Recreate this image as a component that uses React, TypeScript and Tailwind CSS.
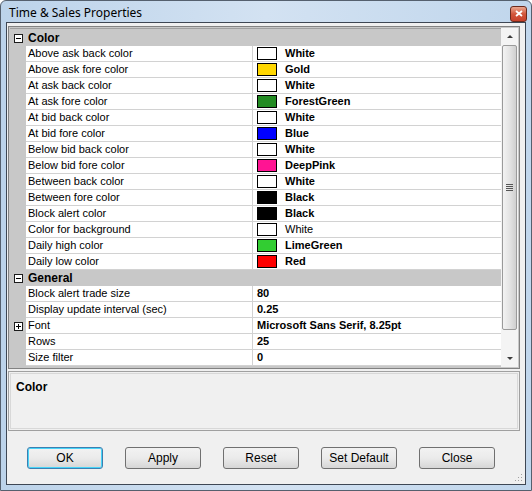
import React from 'react';

interface Prop { name: string; value: string; swatch?: string; bold?: boolean; expand?: boolean; }
interface Category { title: string; items: Prop[]; }

const CATEGORIES: Category[] = [
  {
    title: 'Color',
    items: [
      { name: 'Above ask back color', value: 'White', swatch: '#ffffff', bold: true },
      { name: 'Above ask fore color', value: 'Gold', swatch: '#ffd700', bold: true },
      { name: 'At ask back color', value: 'White', swatch: '#ffffff', bold: true },
      { name: 'At ask fore color', value: 'ForestGreen', swatch: '#228b22', bold: true },
      { name: 'At bid back color', value: 'White', swatch: '#ffffff', bold: true },
      { name: 'At bid fore color', value: 'Blue', swatch: '#0000ff', bold: true },
      { name: 'Below bid back color', value: 'White', swatch: '#ffffff', bold: true },
      { name: 'Below bid fore color', value: 'DeepPink', swatch: '#ff1493', bold: true },
      { name: 'Between back color', value: 'White', swatch: '#ffffff', bold: true },
      { name: 'Between fore color', value: 'Black', swatch: '#000000', bold: true },
      { name: 'Block alert color', value: 'Black', swatch: '#000000', bold: true },
      { name: 'Color for background', value: 'White', swatch: '#ffffff' },
      { name: 'Daily high color', value: 'LimeGreen', swatch: '#32cd32', bold: true },
      { name: 'Daily low color', value: 'Red', swatch: '#ff0000', bold: true },
    ],
  },
  {
    title: 'General',
    items: [
      { name: 'Block alert trade size', value: '80', bold: true },
      { name: 'Display update interval (sec)', value: '0.25', bold: true },
      { name: 'Font', value: 'Microsoft Sans Serif, 8.25pt', bold: true, expand: true },
      { name: 'Rows', value: '25', bold: true },
      { name: 'Size filter', value: '0', bold: true },
    ],
  },
];

const BUTTONS = ['OK', 'Apply', 'Reset', 'Set Default', 'Close'];

const ExpandBox: React.FC<{ open: boolean }> = ({ open }) => (
  <div className="relative h-[9px] w-[9px] border border-[#1c1c1c] bg-white">
    <div className="absolute left-[1px] top-[3px] h-px w-[5px] bg-black" />
    {!open && <div className="absolute left-[3px] top-[1px] h-[5px] w-px bg-black" />}
  </div>
);

const Row: React.FC<{ p: Prop }> = ({ p }) => (
  <div className="flex h-[16px]">
    <div className="flex w-[16px] shrink-0 items-center justify-center bg-[#c8c8c8]">
      {p.expand && <ExpandBox open={false} />}
    </div>
    <div className="flex w-[227px] shrink-0 items-center border-b border-r border-[#d2d2d2] bg-white pl-[2px] text-black">
      {p.name}
    </div>
    <div className={`flex flex-1 items-center border-b border-[#d2d2d2] bg-white pl-[4px] text-black ${p.bold ? 'font-bold' : ''}`}>
      {p.swatch && <span className="mr-[8px] h-[13px] w-[20px] shrink-0 border border-black" style={{ background: p.swatch }} />}
      {p.value}
    </div>
  </div>
);

const Scrollbar: React.FC = () => (
  <div className="flex w-[17px] shrink-0 flex-col bg-[#f4f4f4]">
    <div className="flex h-[17px] items-center justify-center">
      <div className="h-0 w-0 border-x-[3px] border-b-[3px] border-x-transparent border-b-[#3c3c3c]" />
    </div>
    <div className="mx-[1px] flex h-[285px] items-center justify-center rounded-[2px] border border-[#9a9a9a] bg-gradient-to-r from-[#f3f3f3] via-[#e4e4e4] to-[#cfcfcf]">
      <div className="flex flex-col gap-[1px]">
        <div className="h-px w-[7px] bg-[#555]" />
        <div className="h-px w-[7px] bg-[#555]" />
        <div className="h-px w-[7px] bg-[#555]" />
        <div className="h-px w-[7px] bg-[#555]" />
      </div>
    </div>
    <div className="flex-1" />
    <div className="flex h-[17px] items-center justify-center">
      <div className="h-0 w-0 border-x-[3px] border-t-[3px] border-x-transparent border-t-[#3c3c3c]" />
    </div>
  </div>
);

export default function App() {
  return (
    <div
      className="flex h-[491px] w-[532px] flex-col overflow-hidden rounded-t-[6px] border border-[#55606e] bg-gradient-to-r from-[#bcd3ea] via-[#d3e2f2] to-[#c0d6ec] text-[11px]"
      style={{ fontFamily: '"Liberation Sans", Arial, sans-serif' }}
    >
      <div className="flex h-[21px] shrink-0 items-center justify-between pl-[8px] pr-[4px]">
        <span className="pt-[3px] text-[12px] text-black" style={{ fontFamily: '"Noto Sans", "Liberation Sans", sans-serif' }}>
          Time &amp; Sales Properties
        </span>
        <div className="mt-[4px] flex h-[16px] w-[17px] items-center justify-center rounded-[3px] border border-[#6b2a1c] bg-gradient-to-b from-[#e9a790] via-[#d2563b] to-[#c7402a]">
          <svg width="8" height="7" viewBox="0 0 8 7">
            <path d="M1 1 L7 6 M7 1 L1 6" stroke="#ffffff" strokeWidth="1.8" />
          </svg>
        </div>
      </div>

      <div className="mx-[5px] mb-[5px] flex flex-1 flex-col border border-[#3e4754] bg-[#f0f0f0]">
        <div className="ml-[1px] mr-[5px] mt-[3px] flex h-[343px] border border-[#828282] bg-[#c8c8c8] p-px">
          <div className="flex flex-1 flex-col overflow-hidden border-t border-[#a0a0a0] bg-[#c8c8c8] pt-px">
            {CATEGORIES.map(c => (
              <React.Fragment key={c.title}>
                <div className="flex h-[16px] items-center bg-[#c8c8c8]">
                  <div className="flex w-[16px] justify-center">
                    <ExpandBox open />
                  </div>
                  <span className="pl-[2px] text-[12px] font-bold text-black">{c.title}</span>
                </div>
                {c.items.map(p => <Row key={p.name} p={p} />)}
              </React.Fragment>
            ))}
          </div>
          <Scrollbar />
        </div>

        <div className="ml-[1px] mr-[5px] mt-[2px] h-[60px] border border-[#a0a0a0] p-px">
          <div className="h-full border border-[#d8d8d8] px-[5px] pt-[4px] text-[12px] font-bold text-black">Color</div>
        </div>

        <div className="mt-[16px] flex items-center gap-[22px] pl-[20px]">
          {BUTTONS.map(b => (
            <div
              key={b}
              className={`flex h-[22px] w-[76px] items-center justify-center rounded-[3px] border bg-gradient-to-b from-[#f2f2f2] via-[#ebebeb] to-[#d6d6d6] text-[12px] text-black ${
                b === 'OK' ? 'border-[#3c7fb1] shadow-[inset_0_0_0_1px_#48d4f8]' : 'border-[#707070]'
              }`}
            >
              {b}
            </div>
          ))}
        </div>

        <div className="flex-1" />
        <div className="flex justify-end pb-[2px] pr-[2px]">
          <svg width="10" height="10" viewBox="0 0 10 10">
            <rect x="8" y="2" width="1" height="1" fill="#a0a0a0" />
            <rect x="5" y="5" width="1" height="1" fill="#a0a0a0" />
            <rect x="8" y="5" width="1" height="1" fill="#a0a0a0" />
            <rect x="2" y="8" width="1" height="1" fill="#a0a0a0" />
            <rect x="5" y="8" width="1" height="1" fill="#a0a0a0" />
            <rect x="8" y="8" width="1" height="1" fill="#a0a0a0" />
          </svg>
        </div>
      </div>
    </div>
  );
}
